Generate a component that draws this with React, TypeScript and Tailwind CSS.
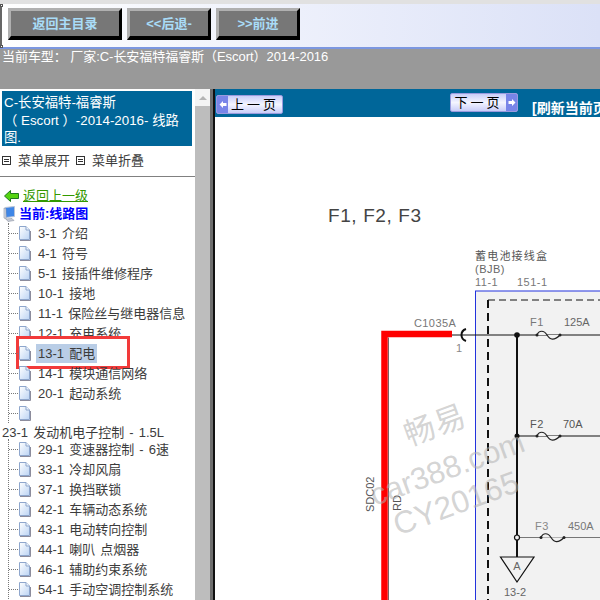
const font = "font-['Liberation_Sans','Noto_Sans_CJK_SC',sans-serif]";

const group1 = ['3-1 介绍', '4-1 符号', '5-1 接插件维修程序', '10-1 接地', '11-1 保险丝与继电器信息', '12-1 充电系统', '13-1 配电', '14-1 模块通信网络', '20-1 起动系统', ''];
const group2 = ['29-1 变速器控制 - 6速', '33-1 冷却风扇', '37-1 换挡联锁', '42-1 车辆动态系统', '43-1 电动转向控制', '44-1 喇叭 点烟器', '46-1 辅助约束系统', '54-1 手动空调控制系统'];

function PageIcon() {
  return (
    <svg width="13" height="16" viewBox="0 0 13 16" className="shrink-0">
      <defs>
        <linearGradient id="pg" x1="0" y1="0" x2="1" y2="1">
          <stop offset="0" stopColor="#ffffff" />
          <stop offset="1" stopColor="#bcd4f4" />
        </linearGradient>
      </defs>
      <path d="M1.5 1.5H8L11.5 5V14.5H1.5Z" fill="url(#pg)" stroke="#8ea6cc" />
      <path d="M8 1.500V5H11.500" fill="#eef4fc" stroke="#8ea6cc" />
      <path d="M2 15.500H12.500V6" fill="none" stroke="#8c8c9c" />
    </svg>
  );
}

function ToolButton({ label, width }: { label: string; width: string }) {
  return (
    <button className={`${width} h-[32px] bg-[#777777] border-t-[3px] border-l-[3px] border-r-[3px] border-b-[4px] border-t-[#b0b0b0] border-l-[#b0b0b0] border-r-black border-b-black text-[13px] font-bold text-[#a9dcf7] flex items-center justify-center`}>
      {label}
    </button>
  );
}

function TreeRow({ label }: { label: string }) {
  const selected = label.startsWith('13-1');
  return (
    <div className="relative h-5 flex items-center">
      {selected && <div className="absolute left-[7px] top-[-7px] w-[114px] h-[33px] bg-white border-[3px] border-[#f23a3a]" />}
      <div className="relative w-[9px] border-t border-dotted border-[#777777]" />
      <div className="relative"><PageIcon /></div>
      <span className={`relative ml-[5px] px-[2px] h-[19px] leading-[19px] text-[13px] [word-spacing:1.5px] text-[#3c3c3c] whitespace-nowrap ${selected ? 'bg-[#b9cde6]' : ''}`}>{label}</span>
    </div>
  );
}

function PageButton({ label, dir, width }: { label: string; dir: 'left' | 'right'; width: string }) {
  const arrow = (
    <div className="w-[11px] self-stretch bg-[#7885e8] flex items-center justify-center">
      <svg width="8" height="9" viewBox="0 0 8 9">
        <path d={dir === 'left' ? 'M0.500 4.500L4 1V3H7.500V6H4V8Z' : 'M7.500 4.500L4 1V3H0.500V6H4V8Z'} fill="#ffffff" />
      </svg>
    </div>
  );
  return (
    <div className={`${width} h-[19px] rounded-[2px] border border-[#9a9ade] bg-gradient-to-b from-[#c9cdf8] via-[#f4f5ff] to-[#c9cdf8] flex items-center overflow-hidden`}>
      {dir === 'left' && arrow}
      <span className="flex-1 text-center text-[13px] leading-none text-black tracking-[3px]">{label}</span>
      {dir === 'right' && arrow}
    </div>
  );
}

function Fuse({ x, y }: { x: number; y: number }) {
  return (
    <g>
      <path d={`M${x} ${y}C${x + 2} ${y - 5} ${x + 7} ${y - 5} ${x + 10} ${y}S${x + 17} ${y + 6} ${x + 23} ${y}`} fill="#f2f2f2" stroke="#222222" strokeWidth="1.2" />
      <circle cx={x} cy={y} r="1.5" fill="#222222" />
      <circle cx={x + 23} cy={y} r="1.5" fill="#222222" />
    </g>
  );
}

function Diagram() {
  const sans = "'Liberation Sans', 'Noto Sans CJK SC', sans-serif";
  return (
    <svg viewBox="215 117 385 483" className="w-[385px] h-[483px] block" fontFamily={sans}>
      <text x="328" y="222" fontSize="19" fill="#444444" letterSpacing="0.6">F1, F2, F3</text>
      <text x="475" y="260" fontSize="11" fill="#555555" letterSpacing="1.2">蓄电池接线盒</text>
      <text x="475" y="273" fontSize="11" fill="#666666" letterSpacing="0.5">(BJB)</text>
      <text x="475" y="286" fontSize="11" fill="#777777" letterSpacing="0.5">11-1</text>
      <text x="517" y="286" fontSize="11" fill="#777777" letterSpacing="0.5">151-1</text>
      <rect x="475.5" y="291" width="140" height="320" fill="#f2f2f2" stroke="#2233dd" strokeWidth="1" />
      <path d="M488 300H600" stroke="#111111" strokeWidth="1" strokeDasharray="7 4" />
      <path d="M488 300V600" stroke="#111111" strokeWidth="2" strokeDasharray="8 5" />
      <text x="414" y="327" fontSize="11" fill="#777777" letterSpacing="0.4">C1035A</text>
      <text x="456" y="352" fontSize="11" fill="#888888">1</text>
      <path d="M384.500 600V334H452" fill="none" stroke="#ff0000" strokeWidth="6.500" />
      <path d="M388.500 337.500V600" stroke="#5a3a3a" strokeWidth="0.800" />
      <path d="M452 335H600" stroke="#111111" strokeWidth="1" />
      <path d="M466 329C460 331 460 339 466 341" fill="none" stroke="#111111" strokeWidth="2" />
      <path d="M517 335V557" stroke="#111111" strokeWidth="2" />
      <circle cx="517" cy="335" r="2.800" fill="#111111" />
      <Fuse x={537} y={335} />
      <text x="530" y="326" fontSize="11" fill="#777777" letterSpacing="0.5">F1</text>
      <text x="564" y="326" fontSize="11" fill="#666666">125A</text>
      <path d="M517 436H600" stroke="#111111" strokeWidth="1" />
      <circle cx="517" cy="436" r="2.500" fill="#111111" />
      <Fuse x={537} y={436} />
      <text x="530" y="428" fontSize="11" fill="#555555" letterSpacing="0.5">F2</text>
      <text x="563" y="428" fontSize="11" fill="#555555">70A</text>
      <path d="M517 537.500H600" stroke="#777777" strokeWidth="1" />
      <circle cx="517" cy="537.500" r="2.500" fill="#f2f2f2" stroke="#111111" strokeWidth="1.200" />
      <Fuse x={541} y={537.500} />
      <text x="535" y="530" fontSize="11" fill="#888888" letterSpacing="0.5">F3</text>
      <text x="568" y="530" fontSize="11" fill="#777777">450A</text>
      <path d="M500.500 557H534L517 582Z" fill="#f2f2f2" stroke="#111111" strokeWidth="1.200" />
      <text x="517" y="570" fontSize="11" fill="#666666" textAnchor="middle">A</text>
      <text x="504" y="596" fontSize="11" fill="#666666">13-2</text>
      <text transform="translate(374 512) rotate(-90)" fontSize="11" fill="#555555">SDC02</text>
      <text transform="translate(401 511) rotate(-90)" fontSize="11" fill="#555555">RD</text>
      <g fill="#b0b0b0" fillOpacity="0.550" textAnchor="middle">
        <text transform="translate(435 425) rotate(-20)" y="11" fontSize="31" letterSpacing="1">畅易</text>
        <text transform="translate(447 468) rotate(-20)" y="11" fontSize="31">car388.com</text>
        <text transform="translate(456 503) rotate(-20)" y="11" fontSize="31.500">CY20165</text>
      </g>
    </svg>
  );
}

export default function App() {
  return (
    <div className={`w-[600px] h-[600px] overflow-hidden bg-white flex flex-col ${font}`}>
      <div className="h-[4px] bg-[#e1e1e1]" />
      {/* 工具栏 */}
      <div className="relative h-[43px] pl-[6px] pt-[4px] flex gap-[5px] bg-gradient-to-r from-white to-[#dbe1f7] border-l-[2px] border-l-[#666666]">
        <span className="absolute left-[-2px] top-[0px] w-[3px] h-[3px] bg-white border border-[#555555]" />
        <span className="absolute left-[-2px] bottom-[-1px] w-[3px] h-[3px] bg-white border border-[#555555]" />
        <ToolButton label="返回主目录" width="w-[114px]" />
        <ToolButton label="<<后退-" width="w-[84px]" />
        <ToolButton label=">>前进" width="w-[84px]" />
      </div>
      <div className="h-[2px] bg-[#7c97e0]" />
      <div className="h-[40px] bg-[#999999] pl-[2px] text-[13px] leading-[16px] tracking-[-0.05px] text-white whitespace-nowrap">
        当前车型： 厂家:C-长安福特福睿斯（Escort）2014-2016
      </div>

      <div className="flex-1 flex min-h-0">
        {/* 左侧菜单 */}
        <div className="w-[195px] h-[511px] shrink-0 overflow-hidden">
          <div className="mt-[2px] ml-[2px] w-[190px] h-[55px] bg-[#006699] px-[2px] pt-[3px] text-[13.330px] leading-[17.500px] text-white">
            C-长安福特-福睿斯<br />（ Escort ）-2014-2016- 线路<br />图.
          </div>
          <div className="h-[31px] flex items-center pl-[2px] pb-[1px] text-[13px] text-[#3c3c3c] border-b border-[#808080]">
            <span className="w-[9px] h-[9px] border border-[#333333] flex flex-col justify-center gap-[1px] px-[1px] shrink-0">
              <span className="h-px bg-[#333333]" /><span className="h-px bg-[#333333]" />
            </span>
            <span className="ml-[7px]">菜单展开</span>
            <span className="ml-[6px] w-[9px] h-[9px] border border-[#333333] flex flex-col justify-center gap-[1px] px-[1px] shrink-0">
              <span className="h-px bg-[#333333]" /><span className="h-px bg-[#333333]" />
            </span>
            <span className="ml-[7px]">菜单折叠</span>
          </div>
          <div className="h-[11px]" />
          <div className="h-[16px] flex items-center pl-[4px]">
            <svg width="15" height="12" viewBox="0 0 15 12">
              <path d="M0.500 6L6.500 0.500V3.500H14.500V8.500H6.500V11.500Z" fill="#55d411" stroke="#1f7a1f" />
            </svg>
            <span className="ml-[4px] text-[13px] text-[#339900] underline">返回上一级</span>
          </div>
          <div className="h-[19px] flex items-center pl-[3px]">
            <svg width="13" height="16" viewBox="0 0 13 16">
              <path d="M2 1.500L11.500 0.500V10.500L3 11.500Z" fill="#3f86e6" stroke="#b9c4d8" />
              <path d="M1 2V12L3 13V3Z" fill="#d6dbe4" stroke="#8c94a4" strokeWidth="0.600" />
              <path d="M3 13L9 12.500L11 14.500L5 15.500Z" fill="#c8ccd6" stroke="#8c94a4" strokeWidth="0.600" />
            </svg>
            <span className="ml-[3px] text-[13px] font-bold text-[#0000ff]">当前:线路图</span>
          </div>
          <div className="ml-[8px] border-l border-dotted border-[#777777]">
            {group1.map((label, i) => <TreeRow key={i} label={label} />)}
          </div>
          <div className="h-[16px] pl-[2px] text-[13px] leading-[19px] [word-spacing:1.5px] text-[#3c3c3c] whitespace-nowrap">23-1 发动机电子控制 - 1.5L</div>
          <div className="ml-[8px] border-l border-dotted border-[#777777]">
            {group2.map((label, i) => <TreeRow key={i} label={label} />)}
          </div>
        </div>

        {/* 滚动条 */}
        <div className="w-[15px] shrink-0 bg-[#f4f4f4] flex flex-col">
          <div className="h-[17px] flex items-center justify-center">
            <div className="w-0 h-0 border-l-[4px] border-r-[4px] border-b-[4px] border-l-transparent border-r-transparent border-b-[#b4b4b4]" />
          </div>
          <div className="flex-1 bg-[#bdbdbd]" />
        </div>
        <div className="w-[3px] shrink-0 bg-[#6e6e6e]" />
        <div className="w-[2px] shrink-0 bg-[#111111]" />

        {/* 右侧内容 */}
        <div className="w-[385px] shrink-0">
          <div className="h-[28px] bg-[#006699] flex items-start text-white">
            <div className="ml-[1px] mt-[6px]"><PageButton label="上一页" dir="left" width="w-[67px]" /></div>
            <div className="ml-[167px] mt-[4px]"><PageButton label="下一页" dir="right" width="w-[68px]" /></div>
            <div className="ml-[14px] mt-[11px] text-[14px] leading-[16px] font-bold whitespace-nowrap">[刷新当前页</div>
          </div>
          <Diagram />
        </div>
      </div>
    </div>
  );
}
